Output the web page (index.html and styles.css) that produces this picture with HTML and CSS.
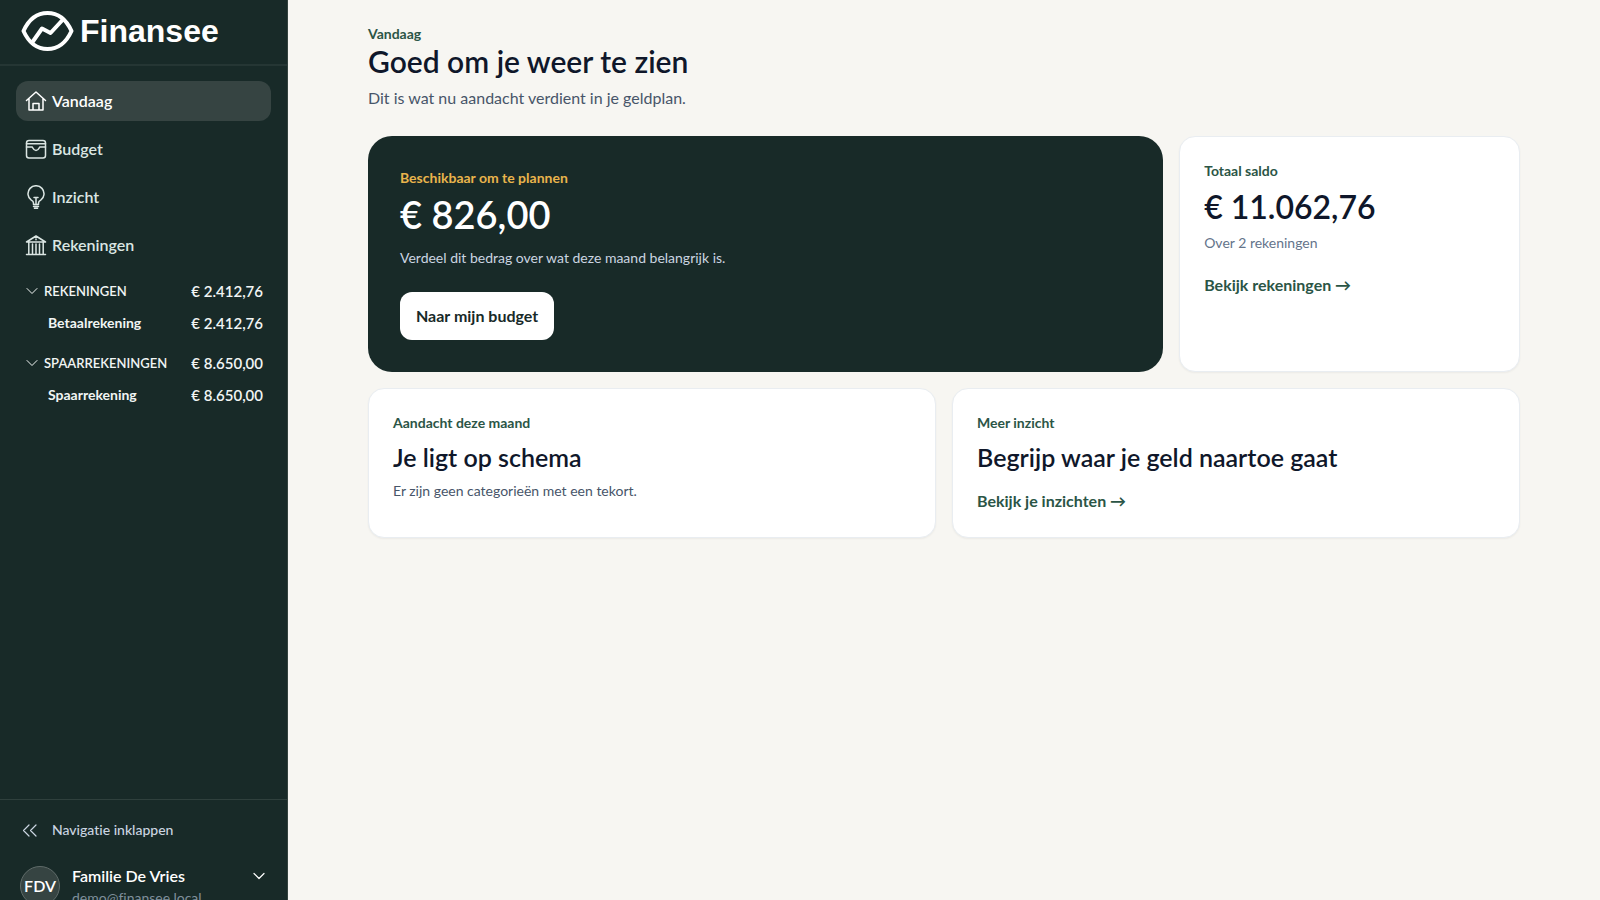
FILE: index.html
```html
<!DOCTYPE html>
<html lang="nl">
<head>
    <meta charset="UTF-8">
    <meta name="viewport" content="width=device-width, initial-scale=1.0">
    <title>Vandaag - Finansee</title>
    <link rel="stylesheet" href="styles.css">
</head>
<body>
    <aside class="sidebar">
        <a class="brand" href="#">
            <svg class="brand-mark" viewBox="0 0 52 40" aria-hidden="true">
                <path d="M2 20C7 9 15 2 26 2s19 7 24 18c-5 11-13 18-24 18S7 31 2 20z"/>
                <path d="M11 31l9.500-13.500 8.500 4.500L41 9"/>
            </svg>
            <span>Finansee</span>
        </a>

        <nav class="nav">
            <a class="nav-item active" href="#">
                <svg viewBox="0 0 24 24" aria-hidden="true"><path d="M2.500 11.500L12 3l9.500 8.500M5 9.500V21h14V9.500M9 21v-6.500h6V21"/></svg>
                Vandaag
            </a>
            <a class="nav-item" href="#">
                <svg viewBox="0 0 24 24" aria-hidden="true"><rect x="2.500" y="3.500" width="19" height="17.500" rx="2.500"/><path d="M2.500 6.800h19M2.500 10H8c1 0 .8 3.500 4 3.500s3-3.500 4-3.500h5.500"/></svg>
                Budget
            </a>
            <a class="nav-item" href="#">
                <svg viewBox="0 0 24 24" aria-hidden="true"><path d="M9.500 19.500V18c0-1.500-.8-2-2.200-2.800a8 8 0 1 1 9.400 0c-1.400.8-2.200 1.300-2.200 2.800v1.500zM9.500 21.500h5M10.500 23.300h3M10 12.500h4M12 12.500v7"/></svg>
                Inzicht
            </a>
            <a class="nav-item" href="#">
                <svg viewBox="0 0 24 24" aria-hidden="true"><path d="M2.500 9L12 3l9.500 6zM4.800 9v12M8.500 11v10M12 11v10M15.500 11v10M19.200 9v12M2.500 21.500h19M12 6v.800"/></svg>
                Rekeningen
            </a>
        </nav>

        <div class="accounts">
            <section class="account-group">
                <button class="account-head" type="button" aria-expanded="true">
                    <svg viewBox="0 0 12 12" aria-hidden="true"><path d="M1 3.500l5 5 5-5"/></svg>
                    <span>REKENINGEN</span>
                    <span class="amount">€ 2.412,76</span>
                </button>
                <a class="account-row" href="#"><span>Betaalrekening</span><span class="amount">€ 2.412,76</span></a>
            </section>
            <section class="account-group">
                <button class="account-head" type="button" aria-expanded="true">
                    <svg viewBox="0 0 12 12" aria-hidden="true"><path d="M1 3.500l5 5 5-5"/></svg>
                    <span>SPAARREKENINGEN</span>
                    <span class="amount">€ 8.650,00</span>
                </button>
                <a class="account-row" href="#"><span>Spaarrekening</span><span class="amount">€ 8.650,00</span></a>
            </section>
        </div>

        <div class="sidebar-footer">
            <button class="collapse" type="button">
                <svg viewBox="0 0 20 20" aria-hidden="true"><path d="M9 5l-5.500 5.500L9 16M16 5l-5.500 5.500L16 16"/></svg>
                Navigatie inklappen
            </button>
            <button class="user" type="button">
                <span class="avatar">FDV</span>
                <span class="user-text">
                    <span class="user-name">Familie De Vries</span>
                    <span class="user-mail">demo@finansee.local</span>
                </span>
                <svg viewBox="0 0 12 12" aria-hidden="true"><path d="M1 3.500l5 5 5-5"/></svg>
            </button>
        </div>
    </aside>

    <main class="main">
        <div class="content">
            <header class="page-header">
                <p class="eyebrow">Vandaag</p>
                <h1>Goed om je weer te zien</h1>
                <p class="intro">Dit is wat nu aandacht verdient in je geldplan.</p>
            </header>

            <div class="row row-top">
                <section class="hero">
                    <p class="eyebrow">Beschikbaar om te plannen</p>
                    <p class="hero-amount">€ 826,00</p>
                    <p class="hero-text">Verdeel dit bedrag over wat deze maand belangrijk is.</p>
                    <a class="btn" href="#">Naar mijn budget</a>
                </section>
                <section class="card">
                    <p class="eyebrow">Totaal saldo</p>
                    <p class="total">€ 11.062,76</p>
                    <p class="note muted">Over 2 rekeningen</p>
                    <a class="link link-total" href="#">Bekijk rekeningen →</a>
                </section>
            </div>

            <div class="row">
                <section class="card">
                    <p class="eyebrow">Aandacht deze maand</p>
                    <h2>Je ligt op schema</h2>
                    <p class="note">Er zijn geen categorieën met een tekort.</p>
                </section>
                <section class="card">
                    <p class="eyebrow">Meer inzicht</p>
                    <h2>Begrijp waar je geld naartoe gaat</h2>
                    <a class="link" href="#">Bekijk je inzichten →</a>
                </section>
            </div>
        </div>
    </main>
</body>
</html>
```
FILE: styles.css
```css
* {
    box-sizing: border-box;
}
body {
    margin: 0;
    display: flex;
    height: 100vh;
    overflow: hidden;
    background: #f7f6f2;
    color: #0f172a;
    font-family: Lato, "Open Sans", sans-serif;
    font-size: 16px;
    line-height: 24px;
    font-variant-ligatures: none;
}
h1, h2, p {
    margin: 0;
}
a {
    color: inherit;
    text-decoration: none;
}
button {
    border: 0;
    padding: 0;
    background: none;
    color: inherit;
    font: inherit;
    text-align: left;
    cursor: pointer;
}
svg {
    flex: none;
    fill: none;
    stroke: currentColor;
    stroke-linecap: round;
    stroke-linejoin: round;
}

/* Sidebar */
.sidebar {
    flex: none;
    display: flex;
    flex-direction: column;
    width: 288px;
    background: #182a28;
    border-right: 1px solid #34433f;
    color: #fff;
}
.brand {
    display: flex;
    align-items: center;
    gap: 6px;
    height: 66px;
    padding: 0 21px 2px;
    border-bottom: 2px solid #253634;
    font-family: "Liberation Sans", Arial, sans-serif;
    font-size: 32px;
    font-weight: bold;
}
.brand-mark {
    width: 53px;
    height: 40px;
    stroke-width: 4;
}
.nav {
    display: flex;
    flex-direction: column;
    gap: 8px;
    padding: 15px 16px 0;
}
.nav-item {
    display: flex;
    align-items: center;
    gap: 4px;
    height: 40px;
    padding: 0 8px 1px;
    border-radius: 12px;
    color: #dbe6e3;
    font-weight: 600;
}
.nav-item svg {
    width: 24px;
    height: 24px;
    stroke-width: 1.5;
}
.nav-item.active {
    background: #364442;
    color: #fff;
}
.accounts {
    flex: 1;
    display: flex;
    flex-direction: column;
    gap: 8px;
    padding: 10px 24px 0 26px;
}
.account-head,
.account-row {
    display: flex;
    align-items: center;
    width: 100%;
    height: 32px;
    color: #f1f5f4;
    font-size: 14px;
    font-weight: 700;
}
.account-head {
    font-size: 13px;
    font-weight: 600;
}
.account-head svg {
    width: 12px;
    height: 12px;
    margin-right: 6px;
    stroke-width: 1;
}
.account-row {
    padding-left: 22px;
}
.amount {
    margin-left: auto;
    font-size: 15px;
    font-weight: 600;
    font-variant-numeric: tabular-nums;
}
.sidebar-footer {
    height: 101px;
    border-top: 1px solid #2f403d;
}
.collapse {
    display: flex;
    align-items: center;
    gap: 12px;
    height: 60px;
    padding: 0 20px;
    color: #cbd5e1;
    font-size: 14px;
    font-weight: 500;
}
.collapse svg {
    width: 20px;
    height: 20px;
    stroke-width: 1.2;
}
.user {
    display: flex;
    align-items: flex-start;
    gap: 12px;
    width: 100%;
    padding: 6px 22px 0 20px;
}
.avatar {
    display: flex;
    align-items: center;
    justify-content: center;
    width: 40px;
    height: 40px;
    border: 1px solid #5f6b69;
    border-radius: 50%;
    background: #364442;
    font-weight: 600;
}
.user-text {
    flex: 1;
    display: flex;
    flex-direction: column;
}
.user-name {
    line-height: 20px;
    font-weight: 600;
}
.user-mail {
    color: #7f8f9b;
    font-size: 14px;
}
.user svg {
    width: 12px;
    height: 12px;
    margin-top: 4px;
    stroke-width: 1.2;
}

/* Dashboard */
.main {
    flex: 1;
    min-width: 0;
    padding: 24px 32px;
}
.content {
    max-width: 1152px;
    margin: 0 auto;
}
.eyebrow {
    color: #2b5546;
    font-size: 14px;
    font-weight: 700;
    line-height: 20px;
}
h1 {
    font-size: 30px;
    font-weight: 600;
    line-height: 34px;
}
.intro {
    margin-top: 8px;
    color: #475569;
}
.row {
    display: grid;
    grid-template-columns: 1fr 1fr;
    gap: 16px;
    margin-top: 16px;
}
.row-top {
    grid-template-columns: 7fr 3fr;
    margin-top: 26px;
}
.hero {
    padding: 32px;
    border-radius: 24px;
    background: #182a28;
    color: #fff;
}
.hero .eyebrow {
    color: #e9b44c;
}
.hero-amount {
    margin-top: 6px;
    font-size: 38px;
    font-weight: 600;
    line-height: 40px;
}
.hero-text {
    margin-top: 14px;
    color: #cbd5e1;
    font-size: 14px;
    line-height: 20px;
}
.btn {
    display: inline-block;
    margin-top: 24px;
    padding: 12px 16px;
    border-radius: 12px;
    background: #fff;
    color: #182a28;
    font-weight: 700;
    vertical-align: top;
}
.card {
    padding: 24px;
    border: 1px solid #e9edf1;
    border-radius: 16px;
    background: #fff;
    box-shadow: 0 1px 2px rgba(0, 0, 0, 0.05);
}
.total {
    margin-top: 8px;
    font-size: 32px;
    font-weight: 600;
    line-height: 36px;
}
h2 {
    margin-top: 8px;
    font-size: 25px;
    font-weight: 600;
    line-height: 32px;
}
.note {
    margin-top: 8px;
    color: #475569;
    font-size: 14px;
    line-height: 20px;
}
.note.muted {
    color: #64748b;
}
.link {
    display: inline-block;
    margin-top: 16px;
    color: #2b5546;
    font-weight: 700;
    vertical-align: top;
}
.link-total {
    margin-top: 20px;
}
```
